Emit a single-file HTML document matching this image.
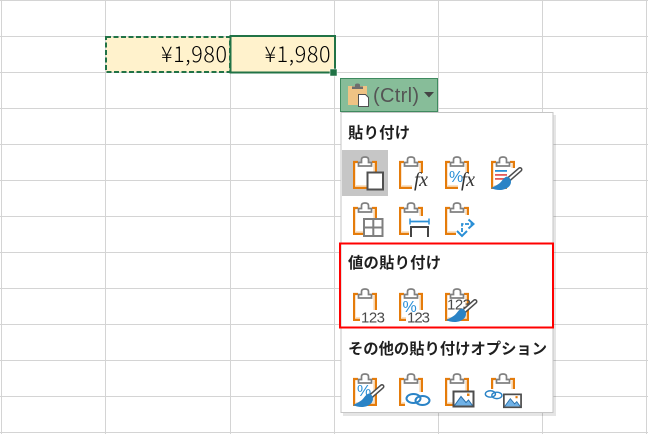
<!DOCTYPE html>
<html lang="ja"><head><meta charset="utf-8">
<style>
html,body{margin:0;padding:0;background:#fff}
body{width:648px;height:434px;overflow:hidden;position:relative;font-family:"Liberation Sans","Noto Sans CJK JP",sans-serif}
svg{position:absolute;left:0;top:0}
.h{font-family:"Noto Sans CJK JP","Liberation Sans",sans-serif;font-weight:700;font-size:15.3px;fill:#1f1f1f}
.n{font-family:"Noto Sans CJK JP","Liberation Sans",sans-serif;font-weight:300;font-size:21.5px;fill:#000}
.f{font-family:"Liberation Serif",serif;font-style:italic;font-size:20px;fill:#333}
.t{font-family:"Liberation Sans",sans-serif;font-size:15px;fill:#4a4a4a}
.pc{font-family:"Liberation Sans",sans-serif;font-size:16px;fill:#2a8fd6}
</style></head><body>
<svg width="648" height="434" viewBox="0 0 648 434" xmlns="http://www.w3.org/2000/svg">
<defs>
<g id="c">
<path d="M5 6H1.100V31.900H22.900V6H19" fill="#fff" stroke="#e57c0b" stroke-width="2.200"/>
<path d="M3 29.900H21V8" fill="none" stroke="#f9d8b2" stroke-width="1.400"/>
<path d="M5.500 10V6.500H8.500V3.500Q8.500 1 12 1Q15.500 1 15.500 3.500V6.500H18.500V10Z" fill="#fff" stroke="#808080" stroke-width="1.700"/>
</g>
<g id="b">
<path d="M17 24L29 13.500" stroke="#4d4d4d" stroke-width="5" stroke-linecap="round"/>
<path d="M17 24L29 13.500" stroke="#fff" stroke-width="2" stroke-linecap="round"/>
<path d="M16 20.500C12 21.500 11 26 7.500 28C5.500 29.500 3 30.500 0 32C6 35 14 35 18.500 30C21 27 20.500 22 16 20.500Z" fill="#2a83c6"/>
</g>
<g id="l" fill="none" stroke="#2a83c6" stroke-width="2">
<ellipse cx="7.500" cy="5.500" rx="7" ry="4.500"/>
<ellipse cx="16.500" cy="7.500" rx="7" ry="4.500"/>
</g>
<g id="m">
<rect x="1" y="1" width="20" height="15" fill="#fff" stroke="#4d4d4d" stroke-width="2"/>
<path d="M2 15L8.500 6L13.500 12L16 9.500L20 15Z" fill="#6fb1e6"/>
<path d="M2 15L8.500 6L13.500 12L16 9.500L20 15" fill="none" stroke="#2a6fa8" stroke-width="1"/>
<rect x="14.500" y="3" width="2.500" height="2.500" fill="#e57c0b"/>
</g>
</defs>

<!-- grid -->
<g fill="#d4d4d4">
<rect x="1" y="0" width="1" height="434"/><rect x="105" y="0" width="1" height="434"/>
<rect x="230" y="0" width="1" height="434"/><rect x="334" y="0" width="1" height="434"/>
<rect x="438" y="0" width="1" height="434"/><rect x="542" y="0" width="1" height="434"/>
<rect x="646" y="0" width="1" height="434"/>
<rect x="0" y="0" width="648" height="1"/><rect x="0" y="36" width="648" height="1"/>
<rect x="0" y="72" width="648" height="1"/><rect x="0" y="108" width="648" height="1"/>
<rect x="0" y="144" width="648" height="1"/><rect x="0" y="180" width="648" height="1"/>
<rect x="0" y="216" width="648" height="1"/><rect x="0" y="252" width="648" height="1"/>
<rect x="0" y="288" width="648" height="1"/><rect x="0" y="324" width="648" height="1"/>
<rect x="0" y="360" width="648" height="1"/><rect x="0" y="396" width="648" height="1"/>
<rect x="0" y="432" width="648" height="1"/>
</g>

<!-- cells -->
<rect x="106" y="37" width="124" height="35" fill="#fff2cc"/>
<rect x="230" y="36" width="105" height="37" fill="#fff2cc"/>
<rect x="106" y="37" width="124" height="35" fill="none" stroke="#217346" stroke-width="2" stroke-dasharray="5 2.500"/>
<rect x="230.500" y="36" width="104.500" height="36.500" fill="none" stroke="#217346" stroke-width="2"/>
<rect x="330" y="69" width="7" height="7" fill="#217346" stroke="#fff" stroke-width="0.500"/>
<text class="n" x="227" y="62" text-anchor="end" textLength="66">¥1,980</text>
<text class="n" x="330.500" y="62" text-anchor="end" textLength="66">¥1,980</text>

<!-- paste button -->
<rect x="340.500" y="78.500" width="97" height="33" fill="#87bd99" stroke="#3f8a5f"/>
<rect x="348" y="86" width="19" height="19" fill="#efc384"/>
<path d="M352 89V86.500H355V85Q355 83.500 357.500 83.500Q360 83.500 360 85V86.500H363V89Z" fill="#6e6e6e"/>
<path d="M358.500 94.500H365.500L368.500 97.500V106.500H358.500Z" fill="#fff" stroke="#505050"/>
<text x="373" y="102" font-family="'Liberation Sans',sans-serif" font-size="20" fill="#555" textLength="46">(Ctrl)</text>
<path d="M424 92H434L429 97.500Z" fill="#444"/>

<!-- menu -->
<rect x="343" y="115" width="213" height="301" fill="#000" opacity="0.10"/>
<rect x="341" y="112.500" width="212" height="300" fill="#fff" stroke="#c6c6c6"/>
<rect x="342" y="150" width="46" height="46" fill="#c6c6c6"/>

<text class="h" x="348" y="138" textLength="62">貼り付け</text>
<text class="h" x="348" y="268" textLength="93">値の貼り付け</text>
<text class="h" x="348" y="354" textLength="199">その他の貼り付けオプション</text>

<!-- row 1 -->
<use href="#c" x="353" y="156"/>
<rect x="367.500" y="172.500" width="15.500" height="17" fill="#fff" stroke="#505050" stroke-width="2"/>

<use href="#c" x="399" y="156"/>
<rect x="412" y="173" width="16" height="17" fill="#fff"/>
<text class="f" x="414" y="186" textLength="14">fx</text>

<use href="#c" x="445" y="156"/>
<rect x="458" y="173" width="16" height="17" fill="#fff"/>
<text class="pc" x="449" y="182" textLength="13">%</text>
<text class="f" x="461" y="186" textLength="14">fx</text>

<use href="#c" x="491" y="156"/>
<rect x="495" y="170" width="15" height="1.800" fill="#2a8fd6"/>
<rect x="495" y="174" width="12" height="1.800" fill="#e25b5b"/>
<rect x="495" y="178" width="10" height="1.800" fill="#e25b5b"/>
<rect x="507" y="168" width="18" height="22" fill="#fff"/>
<use href="#b" x="491" y="156"/>

<!-- row 2 -->
<use href="#c" x="353" y="202"/>
<g fill="#fff" stroke="#7f7f7f" stroke-width="2"><rect x="364" y="219" width="18.500" height="17"/><path d="M373.300 219V236M364 227.500H382.500" fill="none"/></g>

<use href="#c" x="399" y="202"/>
<rect x="409" y="216" width="21" height="21" fill="#fff"/>
<path d="M410 221.500H429" stroke="#2a8fd6" stroke-width="1.800"/><path d="M410 218.500V224.500M429 218.500V224.500" stroke="#2a8fd6" stroke-width="1.500"/>
<path d="M411 237V227H428V237" fill="none" stroke="#444" stroke-width="2"/>

<use href="#c" x="445" y="202"/>
<rect x="456" y="215" width="21" height="23" fill="#fff"/>
<path d="M462 232L462 224L473 224" fill="none" stroke="#2a8fd6" stroke-width="1.800" stroke-dasharray="4 1.500"/>
<path d="M468.500 219.500L473.500 224L468.500 228.500M457 231L462 236L467 231" fill="none" stroke="#2a8fd6" stroke-width="2"/>

<!-- red box -->
<rect x="340" y="243.500" width="213" height="84" fill="none" stroke="#f00" stroke-width="2"/>

<!-- value row -->
<use href="#c" x="353" y="288"/>
<rect x="360" y="310" width="26" height="15" fill="#fff"/>
<text class="t" x="361" y="322.500" textLength="24">123</text>

<use href="#c" x="399" y="288"/>
<rect x="406" y="310" width="24" height="15" fill="#fff"/>
<text class="pc" x="402.500" y="312" textLength="14">%</text>
<text class="t" x="407" y="322.500" textLength="23">123</text>

<use href="#c" x="445" y="288"/>
<text class="t" x="447" y="309.500" textLength="24">123</text>
<use href="#b" x="446" y="288"/>

<!-- other row -->
<use href="#c" x="353" y="373"/>
<text class="pc" x="357" y="396" textLength="12">%</text>
<use href="#b" x="353" y="373"/>

<use href="#c" x="399" y="373"/>
<rect x="405" y="392" width="26" height="16" fill="#fff"/>
<use href="#l" x="406" y="393"/>

<use href="#c" x="445" y="373"/>
<use href="#m" x="452.500" y="390.500"/>

<use href="#c" x="491" y="373"/>
<rect x="484" y="389" width="40" height="20" fill="#fff"/>
<g transform="translate(485,390) scale(.72)"><use href="#l"/></g>
<g transform="translate(503,393.500) scale(.86)"><use href="#m"/></g>
</svg>
</body></html>
